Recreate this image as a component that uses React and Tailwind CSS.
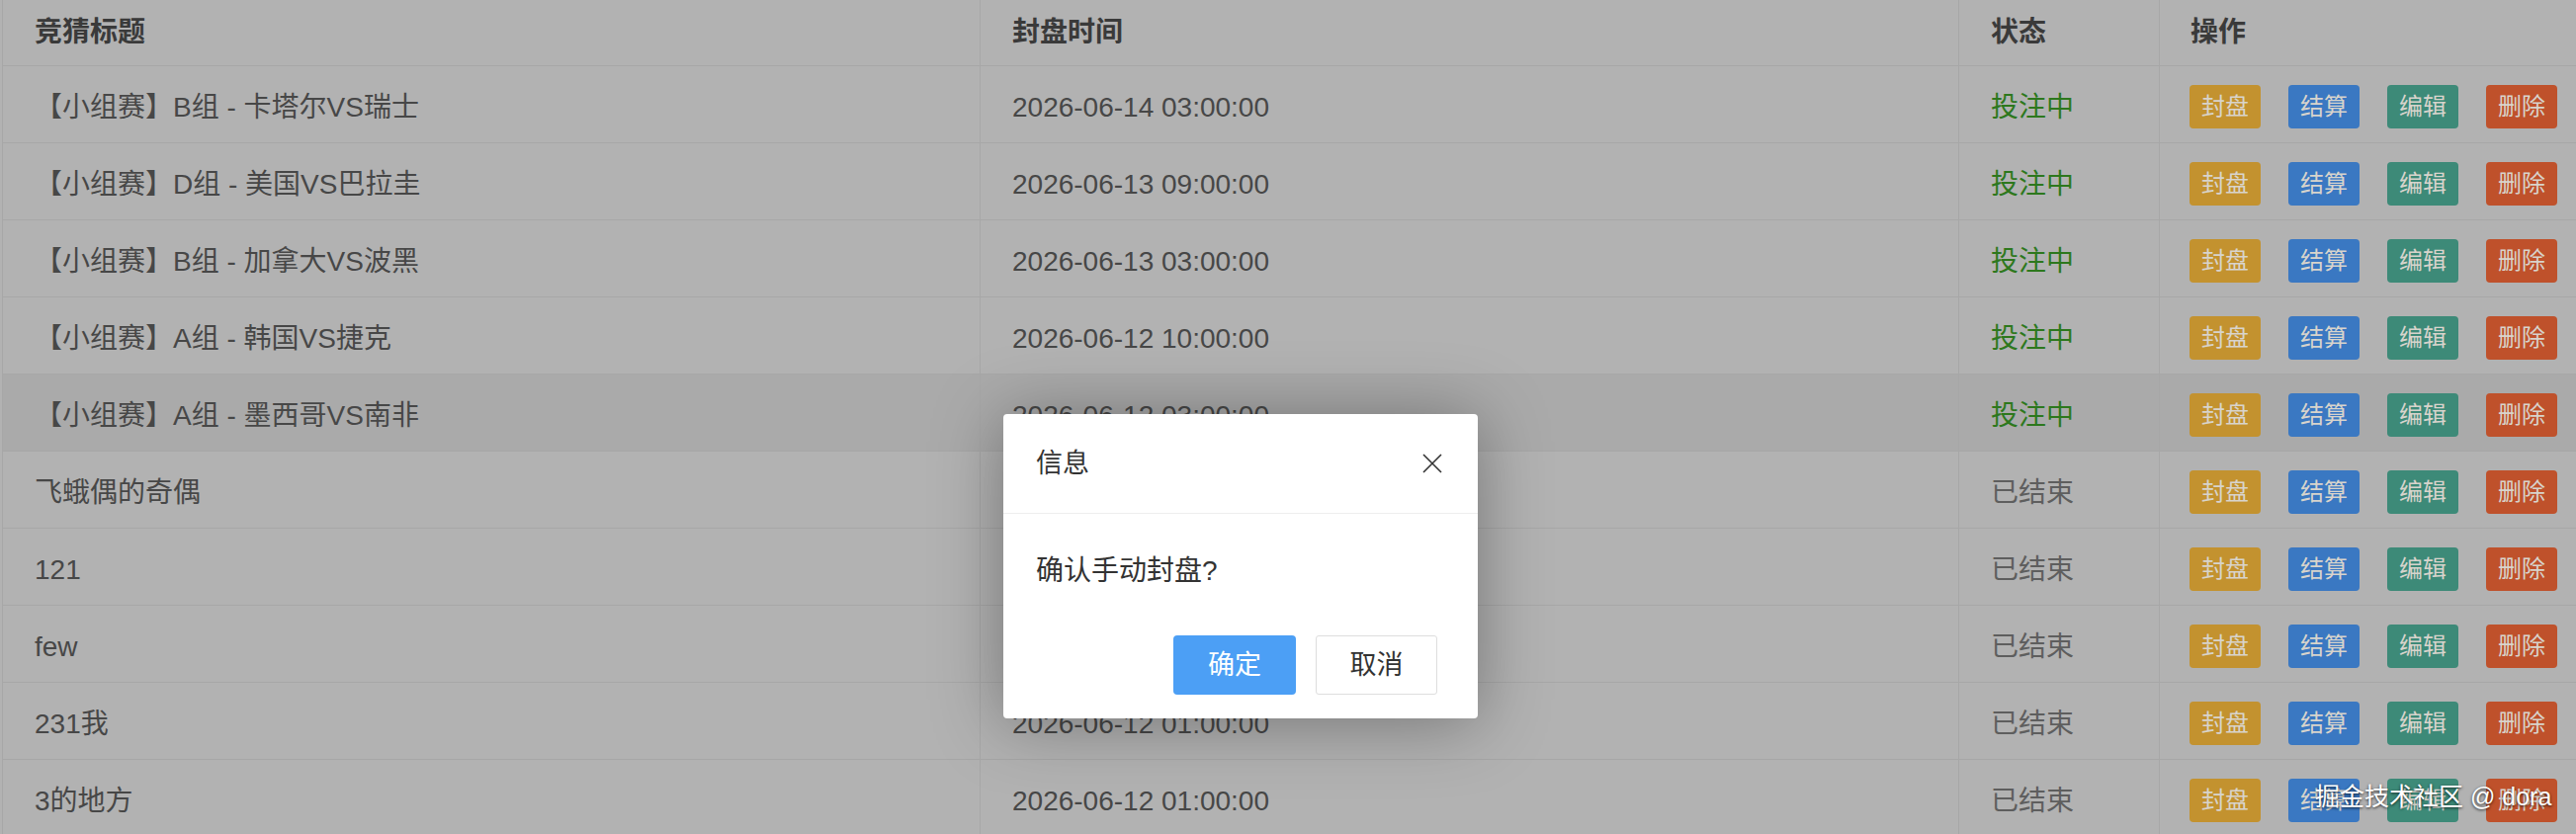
import React from "react";

const rows = [
  ["【小组赛】B组 - 卡塔尔VS瑞士", "2026-06-14 03:00:00", "投注中"],
  ["【小组赛】D组 - 美国VS巴拉圭", "2026-06-13 09:00:00", "投注中"],
  ["【小组赛】B组 - 加拿大VS波黑", "2026-06-13 03:00:00", "投注中"],
  ["【小组赛】A组 - 韩国VS捷克", "2026-06-12 10:00:00", "投注中"],
  ["【小组赛】A组 - 墨西哥VS南非", "2026-06-12 03:00:00", "投注中", true],
  ["飞蛾偶的奇偶", "2026-06-12 01:00:00", "已结束"],
  ["121", "2026-06-12 01:00:00", "已结束"],
  ["few", "2026-06-12 01:00:00", "已结束"],
  ["231我", "2026-06-12 01:00:00", "已结束"],
  ["3的地方", "2026-06-12 01:00:00", "已结束"],
];

function Btn({ cls, children }) {
  return (
    <div
      className={
        "w-[72px] h-[44px] rounded-[4px] flex items-center justify-center text-[24px] leading-none text-[#d8d4cc] " +
        cls
      }
    >
      {children}
    </div>
  );
}

export default function App() {
  return (
    <div
      className="relative w-[2606px] h-[844px] overflow-hidden bg-[#b2b2b2] text-[#474747]"
      style={{ fontFamily: '"Liberation Sans", "Noto Sans CJK SC", sans-serif' }}
    >
      <div className="ml-[2px] border-l border-[#a7a7a7]">
        <div className="grid grid-cols-[989px_990px_203px_1fr] h-[67px] border-b border-[#a7a7a7] text-[28px] font-bold text-[#3a3a3a]">
          <div className="flex items-center px-[32px] border-r border-[#a7a7a7]">竞猜标题</div>
          <div className="flex items-center px-[32px] border-r border-[#a7a7a7]">封盘时间</div>
          <div className="flex items-center px-[32px] border-r border-[#a7a7a7]">状态</div>
          <div className="flex items-center px-[31px]">操作</div>
        </div>
        {rows.map((r, i) => (
          <div
            key={i}
            className={
              "grid grid-cols-[989px_990px_203px_1fr] h-[78px] border-b border-[#a7a7a7] text-[28px] " +
              (r[3] ? "bg-[#aaaaaa]" : "")
            }
          >
            <div className="flex items-center pt-[6px] px-[32px] border-r border-[#a7a7a7] whitespace-nowrap">{r[0]}</div>
            <div className="flex items-center pt-[6px] px-[32px] border-r border-[#a7a7a7] whitespace-nowrap">{r[1]}</div>
            <div
              className={
                "flex items-center pt-[6px] px-[32px] border-r border-[#a7a7a7] whitespace-nowrap " +
                (r[2] === "投注中" ? "text-[#2d781d]" : "text-[#5e5e5e]")
              }
            >
              {r[2]}
            </div>
            <div className="flex items-center pt-[4px] gap-[28px] px-[30px]">
              <Btn cls="bg-[#c3922f]">封盘</Btn>
              <Btn cls="bg-[#3a78c2]">结算</Btn>
              <Btn cls="bg-[#3d8a78]">编辑</Btn>
              <Btn cls="bg-[#bf512b]">删除</Btn>
            </div>
          </div>
        ))}
      </div>

      {/* dialog */}
      <div className="absolute left-[1015px] top-[419px] w-[480px] h-[308px] bg-white rounded-[4px] shadow-[0_4px_70px_rgba(0,0,0,0.35)] flex flex-col text-[#333]">
        <div className="h-[101px] border-b border-[#eeeeee] flex items-center justify-between pl-[33px] pr-[36px] text-[27px]">
          <span>信息</span>
          <svg width="20" height="20" viewBox="0 0 20 20">
            <path d="M1 1 L19 19 M19 1 L1 19" stroke="#333" strokeWidth="1.6" fill="none" />
          </svg>
        </div>
        <div className="pt-[38px] pl-[33px] h-[40px] box-content text-[28px] leading-[40px]">确认手动封盘?</div>
        <div className="flex justify-end gap-[20px] pr-[41px] pt-[45px]">
          <div className="w-[124px] h-[60px] rounded-[4px] bg-[#4c9ff5] text-white text-[27px] flex items-center justify-center">
            确定
          </div>
          <div className="w-[123px] h-[60px] rounded-[3px] border border-[#dedede] bg-white text-[#333] text-[27px] flex items-center justify-center">
            取消
          </div>
        </div>
      </div>

      {/* watermark */}
      <div
        className="absolute left-[2342px] top-[790px] text-[25px] leading-[32px] text-white whitespace-nowrap"
        style={{ textShadow: "0 1px 3px rgba(0,0,0,0.8)" }}
      >
        掘金技术社区 @ dora
      </div>
    </div>
  );
}
